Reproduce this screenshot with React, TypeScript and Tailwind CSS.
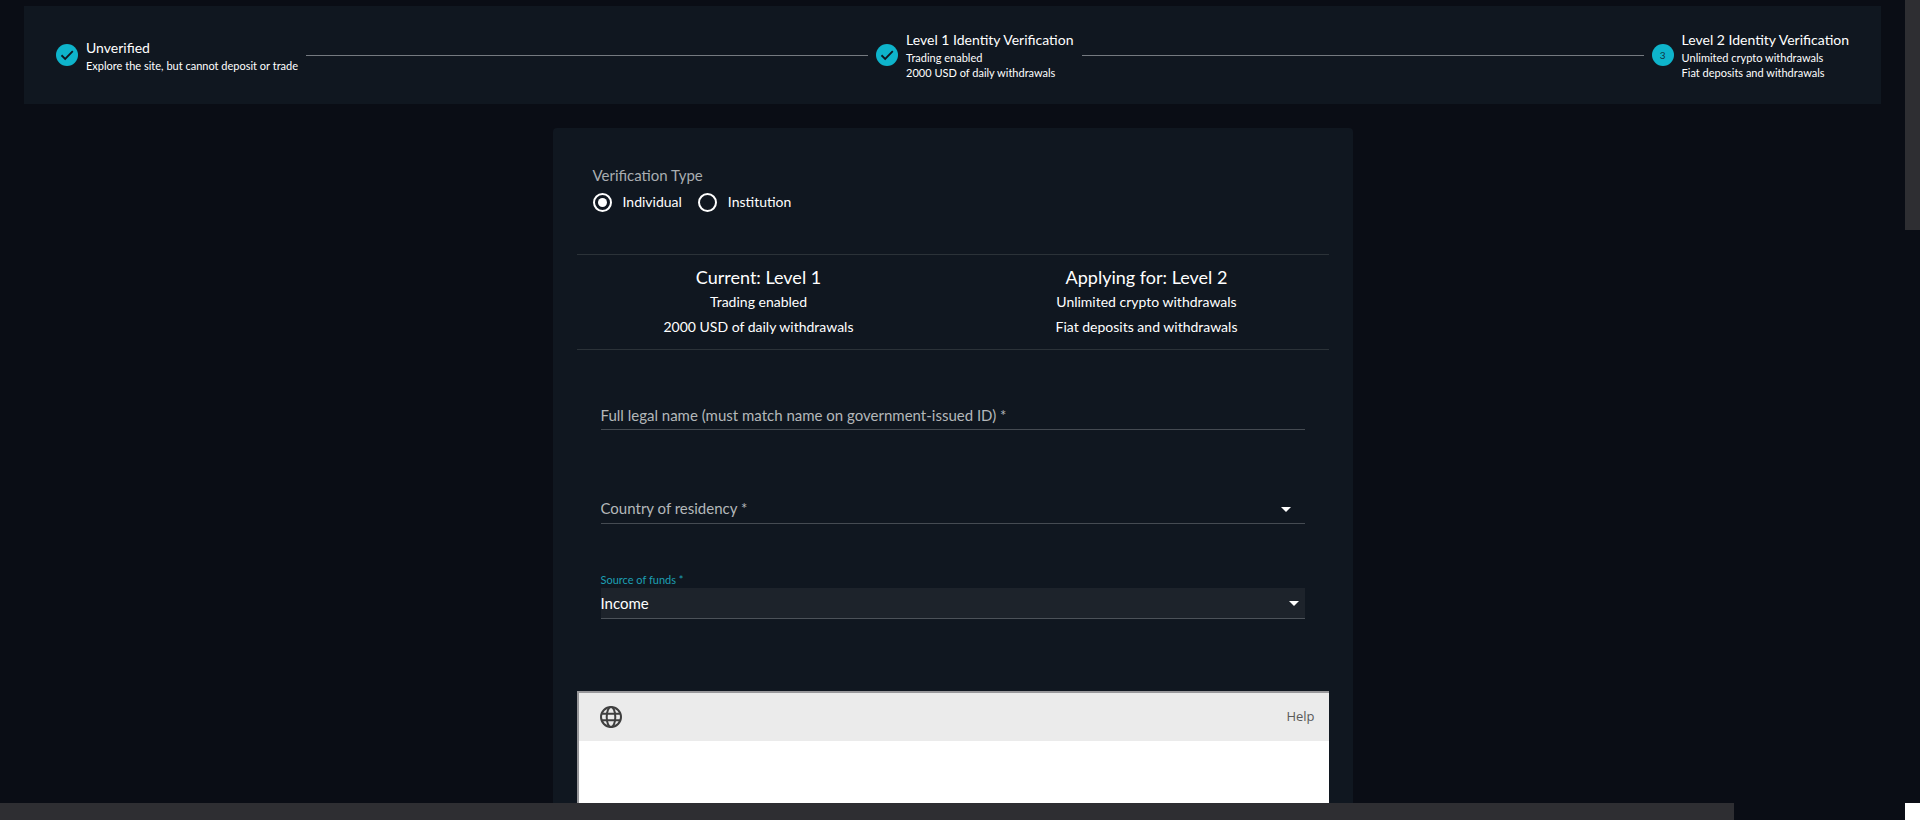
import { useState } from 'react'

const steps = [
  { title: 'Unverified', lines: ['Explore the site, but cannot deposit or trade'], done: true },
  { title: 'Level 1 Identity Verification', lines: ['Trading enabled', '2000 USD of daily withdrawals'], done: true },
  { title: 'Level 2 Identity Verification', lines: ['Unlimited crypto withdrawals', 'Fiat deposits and withdrawals'], done: false },
]

const levels = [
  { title: 'Current: Level 1', lines: steps[1].lines },
  { title: 'Applying for: Level 2', lines: steps[2].lines },
]

function StepIcon({ done, index }: { done: boolean; index: number }) {
  if (!done) {
    return (
      <span className="flex size-[22px] shrink-0 items-center justify-center rounded-full bg-[#0eb4cb] text-[10px] text-[#10343f]">
        {index + 1}
      </span>
    )
  }
  return (
    <svg viewBox="0 0 24 24" className="size-[22px] shrink-0">
      <circle cx="12" cy="12" r="12" fill="#0eb4cb" />
      <path d="M6 12.3 10 16.2 18.3 7.8" fill="none" stroke="#101720" strokeWidth="2" />
    </svg>
  )
}

function Stepper() {
  return (
    <ol className="mx-6 mt-1.5 flex h-[98px] items-center gap-2 bg-[#101720] px-8">
      {steps.map((step, i) => (
        <li key={step.title} className={i > 0 ? 'flex flex-auto items-center gap-2' : 'flex items-center gap-2'}>
          {i > 0 && <span className="h-px flex-1 bg-[#757a80]" />}
          <StepIcon done={step.done} index={i} />
          <div className="whitespace-nowrap">
            <p className="text-sm leading-5">{step.title}</p>
            {step.lines.map((line) => (
              <p key={line} className="text-[11px] leading-[15px]">{line}</p>
            ))}
          </div>
        </li>
      ))}
    </ol>
  )
}

function Caret({ className }: { className: string }) {
  return (
    <svg viewBox="0 0 10 5" className={`pointer-events-none absolute h-[5px] w-[10px] ${className}`}>
      <path d="M0 0h10L5 5z" fill="#fff" />
    </svg>
  )
}

function GlobeIcon() {
  return (
    <svg viewBox="0 0 22 22" className="size-[22px]" fill="none" stroke="#3f3f3f" strokeWidth="2">
      <circle cx="11" cy="11" r="10" />
      <ellipse cx="11" cy="11" rx="4.3" ry="10" />
      <path d="M1.8 7.7h18.4M1.8 14.3h18.4" />
    </svg>
  )
}

export default function App() {
  const [type, setType] = useState('Individual')
  const [name, setName] = useState('')
  const [country, setCountry] = useState('')
  const [source, setSource] = useState('Income')

  return (
    <div className="grid h-screen grid-cols-[1fr_15px] grid-rows-[1fr_17px] overflow-hidden bg-[#0a0d15] font-['Lato',sans-serif] text-white">
      <main className="min-h-0 overflow-hidden">
        <Stepper />

        <form className="mx-auto mt-6 w-full max-w-[800px] rounded bg-[#101720] px-6 pt-9">
          <fieldset className="px-4 pb-[42px]">
            <legend className="text-[15px] leading-[22px] text-[#a9adb1]">Verification Type</legend>
            <div className="flex gap-4 pt-1.5">
              {['Individual', 'Institution'].map((option) => (
                <label key={option} className="flex items-center gap-[11px] text-sm leading-5">
                  <input
                    type="radio"
                    name="type"
                    checked={type === option}
                    onChange={() => setType(option)}
                    className="size-[19px] appearance-none rounded-full border-2 border-white checked:bg-white checked:bg-clip-content checked:p-[3px]"
                  />
                  {option}
                </label>
              ))}
            </div>
          </fieldset>

          <div className="grid grid-cols-2 border-y border-[#2b3238] py-2.5 text-center">
            {levels.map((level, i) => (
              <div key={level.title} className={i === 0 ? 'pr-3' : 'pl-5 pr-2'}>
                <h2 className="text-lg leading-6">{level.title}</h2>
                {level.lines.map((line) => (
                  <p key={line} className="text-sm leading-[25px]">{line}</p>
                ))}
              </div>
            ))}
          </div>

          <div className="px-6 pt-[50px]">
            <input
              type="text"
              aria-label="Full legal name (must match name on government-issued ID)"
              placeholder="Full legal name (must match name on government-issued ID) *"
              value={name}
              onChange={(e) => setName(e.target.value)}
              className="block h-[30px] w-full border-b border-[#454b52] bg-transparent text-[15px] outline-none placeholder:text-[#b4b7ba]"
            />

            <div className="relative mt-16">
              <select
                aria-label="Country of residency"
                value={country}
                onChange={(e) => setCountry(e.target.value)}
                className="block h-[30px] w-full appearance-none border-b border-[#454b52] bg-transparent text-[15px] text-[#b4b7ba] outline-none"
              >
                <option value="">Country of residency *</option>
                <option>Canada</option>
                <option>United States</option>
              </select>
              <Caret className="top-[13px] right-3.5" />
            </div>

            <label htmlFor="source" className="mt-12 block text-[11px] leading-4 text-[#1d9fb3]">
              Source of funds *
            </label>
            <div className="relative">
              <select
                id="source"
                value={source}
                onChange={(e) => setSource(e.target.value)}
                className="block h-[31px] w-full appearance-none border-b border-[#4c5259] bg-[#1d232b] text-[15px] outline-none"
              >
                <option>Income</option>
                <option>Savings</option>
                <option>Investments</option>
              </select>
              <Caret className="top-[13px] right-1.5" />
            </div>
          </div>

          <section className="mt-18 h-[600px] border-t-2 border-l-2 border-[#97979a] bg-white">
            <header className="flex h-12 items-center justify-between bg-[#ebebeb] pr-3.5 pl-[21px]">
              <button type="button" aria-label="Language">
                <GlobeIcon />
              </button>
              <a href="#help" className="font-['Open_Sans',sans-serif] text-[13px] text-[#5a5a5a]">Help</a>
            </header>
          </section>
        </form>
      </main>

      {/* scroll bars */}
      <div>
        <div className="h-[230px] bg-[#2e2e32]" />
      </div>
      <div>
        <div className="h-full w-[91%] bg-[#2e2e32]" />
      </div>
      <div className="bg-white" />
    </div>
  )
}
